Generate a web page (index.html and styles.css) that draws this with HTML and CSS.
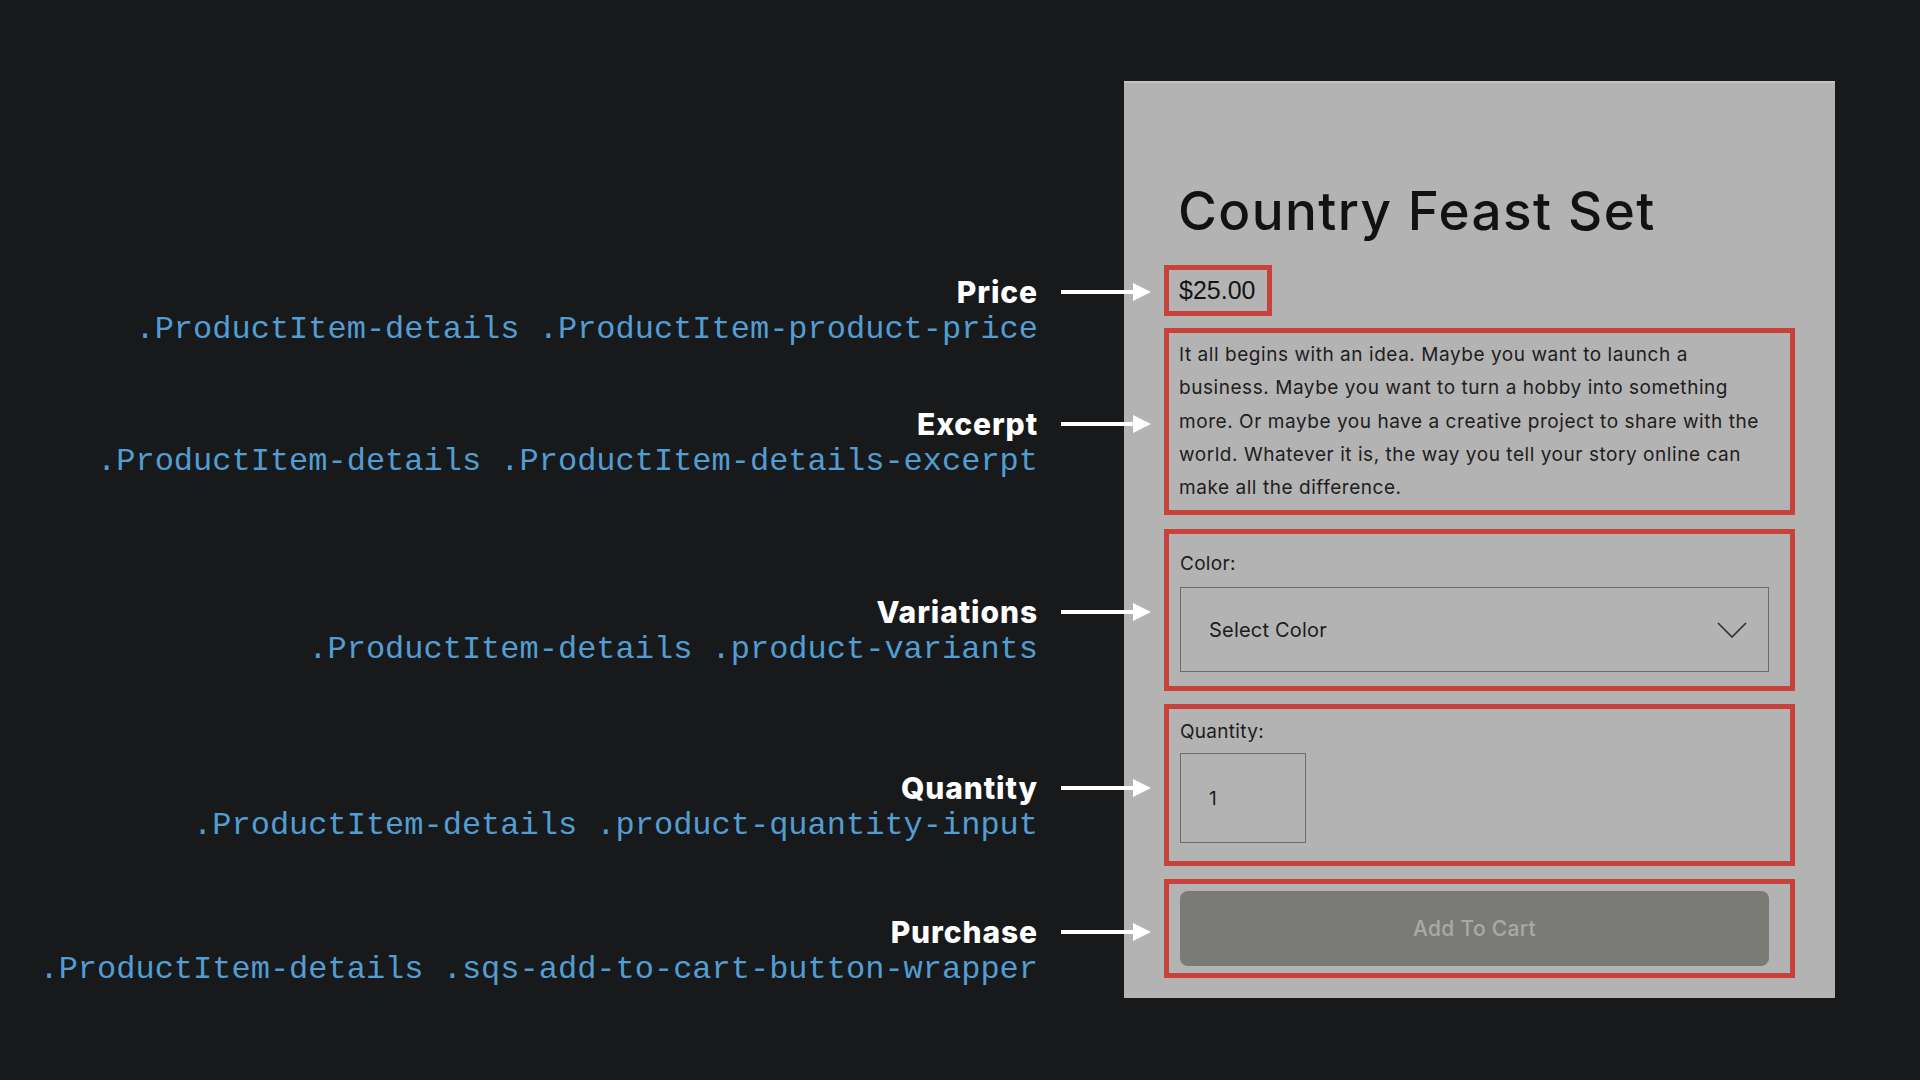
FILE: index.html
```html
<!DOCTYPE html>
<html lang="en">
<head>
<meta charset="utf-8">
<title>Product Item Details</title>
<link rel="stylesheet" href="styles.css">
</head>
<body>
<main class="stage">
  <section class="notes">
    <div class="note note-price">
      <div class="note-title">Price</div>
      <div class="note-code">.ProductItem-details .ProductItem-product-price</div>
      <svg class="arrow" viewBox="0 0 90 20" width="90" height="20"><line x1="0" y1="10" x2="76" y2="10" stroke="#fff" stroke-width="4"/><polygon points="72,1 90,10 72,19" fill="#fff"/></svg>
    </div>
    <div class="note note-excerpt">
      <div class="note-title">Excerpt</div>
      <div class="note-code">.ProductItem-details .ProductItem-details-excerpt</div>
      <svg class="arrow" viewBox="0 0 90 20" width="90" height="20"><line x1="0" y1="10" x2="76" y2="10" stroke="#fff" stroke-width="4"/><polygon points="72,1 90,10 72,19" fill="#fff"/></svg>
    </div>
    <div class="note note-variants">
      <div class="note-title">Variations</div>
      <div class="note-code">.ProductItem-details .product-variants</div>
      <svg class="arrow" viewBox="0 0 90 20" width="90" height="20"><line x1="0" y1="10" x2="76" y2="10" stroke="#fff" stroke-width="4"/><polygon points="72,1 90,10 72,19" fill="#fff"/></svg>
    </div>
    <div class="note note-quantity">
      <div class="note-title">Quantity</div>
      <div class="note-code">.ProductItem-details .product-quantity-input</div>
      <svg class="arrow" viewBox="0 0 90 20" width="90" height="20"><line x1="0" y1="10" x2="76" y2="10" stroke="#fff" stroke-width="4"/><polygon points="72,1 90,10 72,19" fill="#fff"/></svg>
    </div>
    <div class="note note-purchase">
      <div class="note-title">Purchase</div>
      <div class="note-code">.ProductItem-details .sqs-add-to-cart-button-wrapper</div>
      <svg class="arrow" viewBox="0 0 90 20" width="90" height="20"><line x1="0" y1="10" x2="76" y2="10" stroke="#fff" stroke-width="4"/><polygon points="72,1 90,10 72,19" fill="#fff"/></svg>
    </div>
  </section>

  <section class="panel">
    <h1 class="product-title">Country Feast Set</h1>
    <div class="hl price-box">$25.00</div>
    <div class="hl excerpt-box">
      <p class="excerpt">It all begins with an idea. Maybe you want to launch a<br>business. Maybe you want to turn a hobby into something<br>more. Or maybe you have a creative project to share with the<br>world. Whatever it is, the way you tell your story online can<br>make all the difference.</p>
    </div>
    <div class="hl variants-box">
      <div class="field-label">Color:</div>
      <div class="select">
        <span class="select-text">Select Color</span>
        <svg class="chevron" viewBox="0 0 30 16" width="30" height="16"><path d="M1 1 L15 15 L29 1" fill="none" stroke="#2e2e2e" stroke-width="1.6"/></svg>
      </div>
    </div>
    <div class="hl quantity-box">
      <div class="field-label">Quantity:</div>
      <div class="qty-input">1</div>
    </div>
    <div class="hl purchase-box">
      <div class="cart-button">Add To Cart</div>
    </div>
  </section>
</main>
</body>
</html>
```

FILE: styles.css
```css
* { box-sizing: border-box; }

html, body {
  margin: 0;
  padding: 0;
  background: #18191b;
  width: 1920px;
  height: 1080px;
  overflow: hidden;
}

.stage {
  display: flex;
  align-items: flex-start;
}

/* ---------- annotations ---------- */
.notes {
  width: 1038px;
  display: flex;
  flex-direction: column;
  align-items: flex-end;
  text-align: right;
}

.note {
  position: relative;
  display: flex;
  flex-direction: column;
  align-items: flex-end;
}

.note-price { margin-top: 274px; }
.note-excerpt { margin-top: 58px; }
.note-variants { margin-top: 113.5px; }
.note-quantity { margin-top: 102px; }
.note-purchase { margin-top: 70px; }

.note-title {
  font-family: "Inter", "Liberation Sans", sans-serif;
  font-weight: 800;
  font-size: 30px;
  line-height: 36px;
  letter-spacing: 0.9px;
  color: #ffffff;
}

.note-code {
  margin-top: 2px;
  font-family: "Liberation Mono", monospace;
  font-size: 32px;
  line-height: 36px;
  color: #529dd2;
  white-space: nowrap;
}

.arrow {
  position: absolute;
  left: calc(100% + 23px);
  top: 8px;
}

/* ---------- product panel ---------- */
.panel {
  margin-top: 81px;
  margin-left: 86px;
  width: 711px;
  height: 917px;
  background: #b3b3b3;
  border-top: 2px solid #c3c3c3;
  padding: 97px 40px 19px 40px;
  display: flex;
  flex-direction: column;
  font-family: "Inter", "Liberation Sans", sans-serif;
  color: #1c1c1c;
}

.product-title {
  margin: 0;
  font-family: "Inter", "Liberation Sans", sans-serif;
  font-weight: 500;
  font-size: 53px;
  line-height: 62px;
  letter-spacing: 1.4px;
  color: #121212;
  padding-left: 14px;
}

.hl {
  border: 5px solid #c8413b;
}

.price-box {
  margin-top: 23px;
  align-self: flex-start;
  height: 51px;
  padding: 0 12px 0 10px;
  font-family: "Liberation Sans", Arial, sans-serif;
  font-size: 25px;
  line-height: 41px;
  color: #141414;
}

.excerpt-box {
  margin-top: 12px;
  padding: 5px 10px 6px 10px;
}

.excerpt {
  margin: 0;
  font-size: 19px;
  line-height: 33.3px;
  letter-spacing: 0.55px;
  white-space: nowrap;
  color: #202020;
}

.variants-box {
  margin-top: 14px;
  padding: 18px 21px 14px 11px;
}

.field-label {
  font-size: 19px;
  line-height: 24px;
  letter-spacing: 0.3px;
  color: #1c1c1c;
}

.select {
  margin-top: 11px;
  height: 85px;
  border: 1px solid #6c6c6c;
  display: flex;
  align-items: center;
  justify-content: space-between;
  padding: 0 21px 0 28px;
}

.select-text {
  font-size: 20px;
  letter-spacing: 0.2px;
  color: #1c1c1c;
}

.quantity-box {
  margin-top: 13px;
  padding: 11px 21px 18px 11px;
}

.qty-input {
  margin-top: 9px;
  width: 126px;
  height: 90px;
  border: 1px solid #6c6c6c;
  display: flex;
  align-items: center;
  padding-left: 28px;
  font-size: 19px;
  color: #1c1c1c;
}

.purchase-box {
  margin-top: 13px;
  padding: 7px 21px 7px 11px;
}

.cart-button {
  height: 75px;
  border-radius: 8px;
  background: #7a7b77;
  color: #a9aaa7;
  font-size: 21px;
  font-weight: 500;
  letter-spacing: 0.3px;
  display: flex;
  align-items: center;
  justify-content: center;
}
```
